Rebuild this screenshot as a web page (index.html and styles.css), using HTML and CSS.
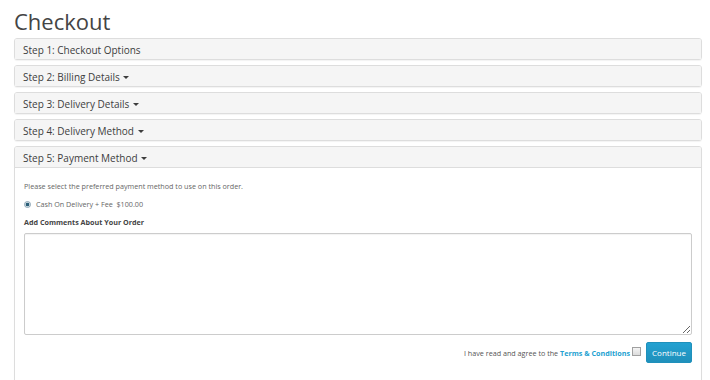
FILE: index.html
```html
<!DOCTYPE html>
<html lang="en">
<head>
<meta charset="utf-8">
<title>Checkout</title>
<link rel="stylesheet" href="styles.css">
</head>
<body>
<div class="container">
  <h1 class="page-title">Checkout</h1>
  <div class="panel">
    <div class="panel-heading">Step 1: Checkout Options</div>
  </div>
  <div class="panel">
    <div class="panel-heading">Step 2: Billing Details <span class="caret"></span></div>
  </div>
  <div class="panel">
    <div class="panel-heading">Step 3: Delivery Details <span class="caret"></span></div>
  </div>
  <div class="panel">
    <div class="panel-heading">Step 4: Delivery Method <span class="caret"></span></div>
  </div>
  <div class="panel">
    <div class="panel-heading open">Step 5: Payment Method <span class="caret"></span></div>
    <div class="panel-body">
      <p class="intro">Please select the preferred payment method to use on this order.</p>
      <label class="radio-row"><input type="radio" name="payment" class="radio" checked> Cash On Delivery + Fee &nbsp;$100.00</label>
      <div class="comments-label">Add Comments About Your Order</div>
      <textarea class="comments"></textarea>
      <div class="agree-row">
        <span class="agree-text">I have read and agree to the <a href="#" class="terms">Terms &amp; Conditions</a></span>
        <input type="checkbox" class="check">
        <button class="btn-continue" type="button">Continue</button>
      </div>
    </div>
  </div>
</div>
</body>
</html>
```
FILE: styles.css
```css
html, body {
  margin: 0;
  padding: 0;
  background: #fff;
}
body {
  font-family: "Open Sans", "DejaVu Sans", sans-serif;
  color: #666;
}
.container {
  padding: 0 8px 0 14px;
}
.page-title {
  margin: 6px 0 2px;
  font-size: 22px;
  line-height: 30px;
  font-weight: 400;
  color: #444;
}
.panel {
  border: 1px solid #dddddd;
  border-radius: 3px;
  margin-bottom: 5px;
  background: #fff;
  box-shadow: 0 1px 1px rgba(0, 0, 0, 0.05);
}
.panel-heading {
  background: #f5f5f5;
  color: #3d3d3d;
  font-size: 10px;
  line-height: 10px;
  padding: 6px 8px 4px;
  border-radius: 2px 2px 0 0;
}
.panel-heading.open {
  border-bottom: 1px solid #dddddd;
}
.caret {
  display: inline-block;
  width: 0;
  height: 0;
  border-top: 3px solid #3d3d3d;
  border-left: 3px solid transparent;
  border-right: 3px solid transparent;
  vertical-align: 2px;
  margin-left: 1px;
}
.panel-body {
  padding: 13px 9px 30px;
  font-size: 7.2px;
  line-height: 10px;
}
.intro {
  margin: 0 0 8px;
}
.radio-row {
  display: flex;
  align-items: center;
  height: 10px;
  margin-bottom: 8px;
}
.radio {
  -webkit-appearance: none;
  appearance: none;
  width: 7px;
  height: 7px;
  margin: 0 5px 0 0;
  border-radius: 50%;
  border: 1px solid #8aa3b3;
  background: radial-gradient(circle, #2b5f78 0, #2b5f78 1.6px, #d9e4ea 2.1px);
  box-sizing: border-box;
}
.comments-label {
  font-weight: 700;
  color: #444;
  margin-bottom: 6px;
}
.comments {
  display: block;
  width: 100%;
  height: 102px;
  box-sizing: border-box;
  border: 1px solid #cccccc;
  border-radius: 2px;
  margin: 0;
  padding: 4px;
  font-family: inherit;
  box-shadow: inset 0 1px 1px rgba(0, 0, 0, 0.05);
}
.agree-row {
  display: flex;
  justify-content: flex-end;
  align-items: center;
  margin-top: 7px;
}
.agree-text {
  color: #555;
}
.terms {
  color: #23a1d1;
  font-weight: 700;
  text-decoration: none;
}
.check {
  -webkit-appearance: none;
  appearance: none;
  width: 9px;
  height: 9px;
  margin: 0 0 2px 2px;
  border: 1px solid #a0a0a0;
  background: linear-gradient(#f4f4f4, #dcdcdc);
  box-sizing: border-box;
}
.btn-continue {
  margin-left: 5px;
  width: 46px;
  height: 21px;
  padding: 0;
  font-family: inherit;
  font-size: 8px;
  color: #fff;
  background: linear-gradient(#23a1d1, #1f90bb);
  border: 1px solid #1f90bb;
  border-radius: 2px;
}
```
